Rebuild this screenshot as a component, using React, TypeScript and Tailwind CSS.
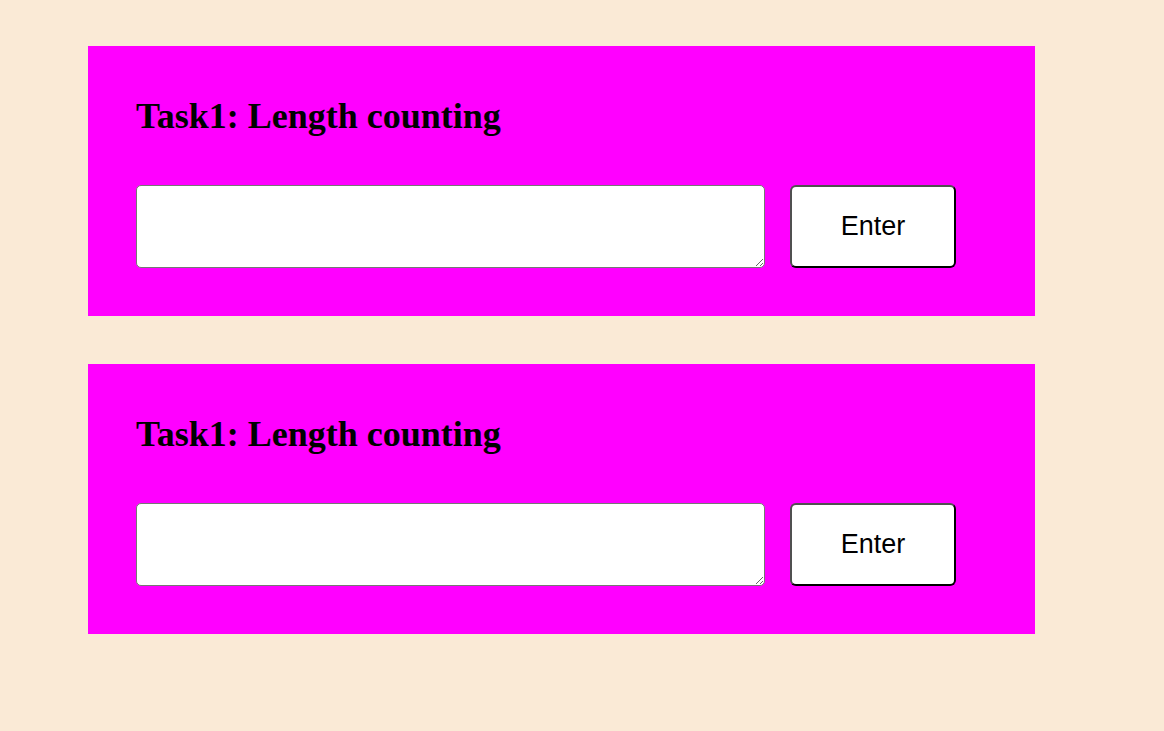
function TaskCard() {
  return (
    <div className="w-[947px] bg-[#ff00ff] px-12 pt-12 pb-12">
      <h1 className="pt-[2px] text-[36px] font-bold leading-[41px] text-black [font-family:'Liberation_Serif',serif]">
        Task1: Length counting
      </h1>
      <div className="mt-[48px] flex items-start">
        <textarea className="h-[83px] w-[629px] rounded-[5px] border border-[#767676] bg-white" />
        <button className="ml-[25px] h-[83px] w-[166px] rounded-[6px] border-2 border-t-[#505050] border-l-[#505050] border-r-black border-b-black bg-white text-[27px] text-black [font-family:'Liberation_Sans',sans-serif]">
          Enter
        </button>
      </div>
    </div>
  )
}

export default function App() {
  return (
    <div className="min-h-[731px] w-full bg-[#faead6] pl-[88px] pt-[46px]">
      <div className="flex flex-col gap-12">
        <TaskCard />
        <TaskCard />
      </div>
    </div>
  )
}
